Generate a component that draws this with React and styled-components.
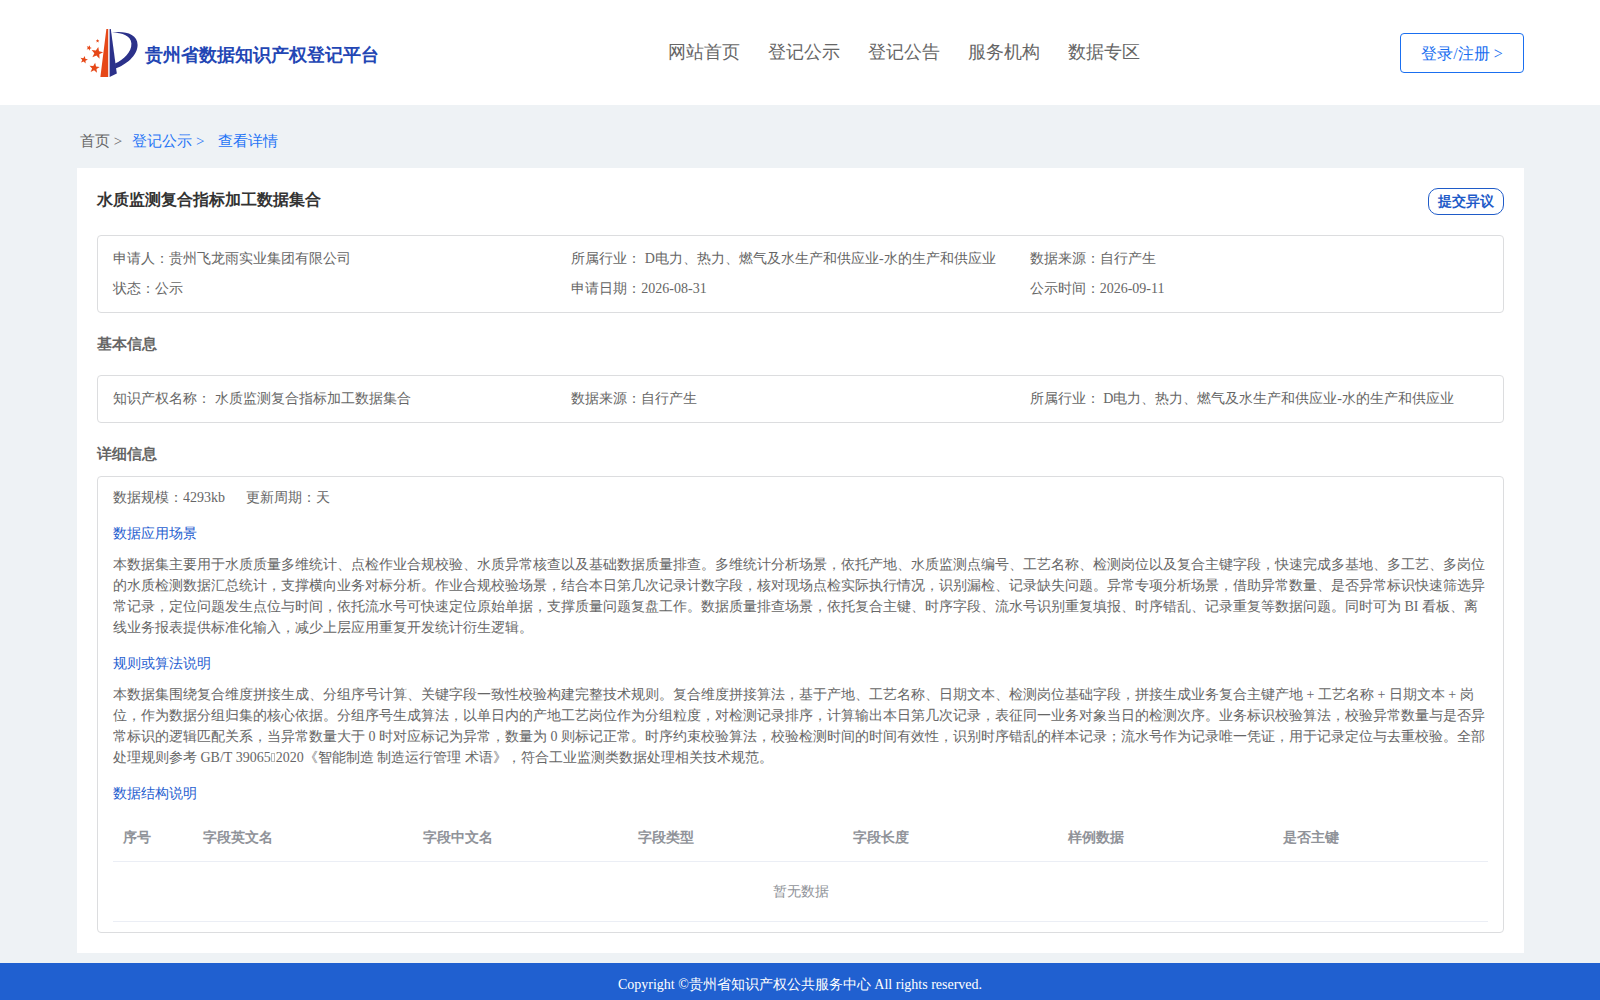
import React from "react";
import styled, { createGlobalStyle } from "styled-components";

const GlobalStyle = createGlobalStyle`
  * { box-sizing: border-box; }
  body {
    margin: 0;
    background: #eef2f5;
    color: #666;
    font-family: "Liberation Serif", serif;
    font-size: 14px;
    line-height: 21px;
  }
  button { font-family: inherit; cursor: pointer; }
  a { color: inherit; text-decoration: none; }
  h1, h2, h3, p, dl, dd { margin: 0; }
`;

const Header = styled.header`
  display: flex;
  align-items: center;
  justify-content: space-between;
  height: 105px;
  padding: 0 76px 0 80px;
  background: #fff;
`;

const Brand = styled.a`
  display: flex;
  align-items: center;
  gap: 7px;
  color: #2346b4;
  font-size: 18px;
  font-weight: bold;
`;

const BrandName = styled.span`
  padding-top: 6px;
`;

const Nav = styled.nav`
  display: flex;
  gap: 28px;
  padding-left: 28px;
  font-size: 18px;
`;

const LoginButton = styled.button`
  width: 124px;
  height: 40px;
  padding: 3px 0 0;
  border: 1px solid #1a6ff0;
  border-radius: 4px;
  background: #fff;
  color: #1a6ff0;
  font-size: 16px;
`;

const Main = styled.main`
  padding: 0 76px 10px 77px;
`;

const Breadcrumb = styled.nav`
  display: flex;
  gap: 10px;
  padding: 26px 3px 16px;
  font-size: 15px;
`;

const Crumb = styled.a`
  color: ${(p) => (p.$active ? "#1f74f5" : "#666")};
  white-space: pre;
`;

const Card = styled.section`
  padding: 20px;
  background: #fff;
`;

const CardHeader = styled.div`
  display: flex;
  align-items: flex-start;
  justify-content: space-between;
  margin-bottom: 20px;
`;

const Title = styled.h1`
  color: #333;
  font-size: 16px;
  line-height: 24px;
`;

const ObjectionButton = styled.button`
  width: 76px;
  height: 27px;
  padding: 0;
  border: 1px solid #1f5bc8;
  border-radius: 10px;
  background: #fff;
  color: #1f5bc8;
  font-size: 14px;
  font-weight: bold;
`;

const SectionTitle = styled.h2`
  margin: 20px 0 ${(p) => (p.$tight ? "11px" : "20px")};
  font-size: 15px;
  line-height: 22px;
`;

const Panel = styled.div`
  border: 1px solid #dcdddf;
  border-radius: 4px;
  padding: ${(p) => p.$pad};
`;

const InfoGrid = styled.dl`
  display: grid;
  grid-template-columns: repeat(3, 1fr);
  line-height: 30px;
`;

const InfoItem = styled.div`
  display: flex;
  white-space: pre;
`;

const Meta = styled.dl`
  display: flex;
  gap: 21px;
`;

const DetailTitle = styled.h3`
  margin: 15px 0 10px;
  color: #1f60d0;
  font-size: 14px;
  font-weight: normal;
`;

const MissingGlyph = styled.span`
  display: inline-block;
  width: 4px;
  height: 9px;
  margin-right: 1px;
  border: 1px solid #b8b8b8;
`;

const Table = styled.table`
  width: 100%;
  table-layout: fixed;
  border-collapse: separate;
  border-spacing: 0;
  color: #909399;
`;

const Th = styled.th`
  width: ${(p) => p.$w};
  height: 48px;
  padding: 0 10px;
  border-bottom: 1px solid #ebeef5;
  text-align: left;
`;

const EmptyCell = styled.td`
  height: 60px;
  padding: 0;
  border-bottom: 1px solid #ebeef5;
  text-align: center;
`;

const Footer = styled.footer`
  padding: 11px 0 5px;
  background: #2060d0;
  color: #fff;
  text-align: center;
`;

const STAR = "0,-1 0.26,-0.34 0.95,-0.31 0.41,0.13 0.59,0.81 0,0.42 -0.59,0.81 -0.41,0.13 -0.95,-0.31 -0.26,-0.34";

const Star = ({ x, y, r, turn }) => (
  <polygon points={STAR} fill="#e64818" transform={`translate(${x} ${y}) rotate(${turn}) scale(${r})`} />
);

const Logo = () => (
  <svg width="58" height="50" viewBox="0 0 58 50" aria-hidden="true">
    <path d="M26.4 1 H28.2 V49 H20.4 Z" fill="#e64818" />
    <path d="M29.6 1 H30.8 L36.8 45.6 L29.6 49 Z" fill="#2b318a" />
    <path d="M32 4.6 C43 2.6 57.8 5.2 57.6 17 C57.4 28 46 36.6 35.4 40.6 L35 35.4 C43.6 31.6 51.8 24 51.4 15.4 C51 8 42.6 4.8 32 4.6 Z" fill="#2b318a" />
    <Star x={17} y={25} r={6.2} turn={12} />
    <Star x={14.4} y={40} r={5.4} turn={8} />
    <Star x={4} y={31.8} r={4} turn={12} />
    <Star x={9} y={20} r={2.8} turn={20} />
    <Star x={17.6} y={13} r={1.9} turn={0} />
  </svg>
);

const NAV = ["网站首页", "登记公示", "登记公告", "服务机构", "数据专区"];

const SUMMARY = [
  ["申请人：", "贵州飞龙雨实业集团有限公司"],
  ["所属行业：", " D电力、热力、燃气及水生产和供应业-水的生产和供应业"],
  ["数据来源：", "自行产生"],
  ["状态：", "公示"],
  ["申请日期：", "2026-08-31"],
  ["公示时间：", "2026-09-11"],
];

const BASIC = [
  ["知识产权名称：", " 水质监测复合指标加工数据集合"],
  ["数据来源：", "自行产生"],
  ["所属行业：", " D电力、热力、燃气及水生产和供应业-水的生产和供应业"],
];

const META = [
  ["数据规模：", "4293kb"],
  ["更新周期：", "天"],
];

const SCENARIO =
  "本数据集主要用于水质质量多维统计、点检作业合规校验、水质异常核查以及基础数据质量排查。多维统计分析场景，依托产地、水质监测点编号、工艺名称、检测岗位以及复合主键字段，快速完成多基地、多工艺、多岗位的水质检测数据汇总统计，支撑横向业务对标分析。作业合规校验场景，结合本日第几次记录计数字段，核对现场点检实际执行情况，识别漏检、记录缺失问题。异常专项分析场景，借助异常数量、是否异常标识快速筛选异常记录，定位问题发生点位与时间，依托流水号可快速定位原始单据，支撑质量问题复盘工作。数据质量排查场景，依托复合主键、时序字段、流水号识别重复填报、时序错乱、记录重复等数据问题。同时可为 BI 看板、离线业务报表提供标准化输入，减少上层应用重复开发统计衍生逻辑。";

const ALGORITHM =
  "本数据集围绕复合维度拼接生成、分组序号计算、关键字段一致性校验构建完整技术规则。复合维度拼接算法，基于产地、工艺名称、日期文本、检测岗位基础字段，拼接生成业务复合主键产地 + 工艺名称 + 日期文本 + 岗位，作为数据分组归集的核心依据。分组序号生成算法，以单日内的产地工艺岗位作为分组粒度，对检测记录排序，计算输出本日第几次记录，表征同一业务对象当日的检测次序。业务标识校验算法，校验异常数量与是否异常标识的逻辑匹配关系，当异常数量大于 0 时对应标记为异常，数量为 0 则标记正常。时序约束校验算法，校验检测时间的时间有效性，识别时序错乱的样本记录；流水号作为记录唯一凭证，用于记录定位与去重校验。全部处理规则参考 GB/T 39065";

const ALGORITHM_END = "2020《智能制造 制造运行管理 术语》，符合工业监测类数据处理相关技术规范。";

const COLUMNS = [
  ["序号", "80px"],
  ["字段英文名", "220px"],
  ["字段中文名", "auto"],
  ["字段类型", "auto"],
  ["字段长度", "auto"],
  ["样例数据", "auto"],
  ["是否主键", "auto"],
];

const Items = ({ items }) =>
  items.map(([label, value]) => (
    <InfoItem key={label}>
      <dt>{label}</dt>
      <dd>{value}</dd>
    </InfoItem>
  ));

export default function App() {
  return (
    <div>
      <GlobalStyle />
      <Header>
        <Brand href="#">
          <Logo />
          <BrandName>贵州省数据知识产权登记平台</BrandName>
        </Brand>
        <Nav>
          {NAV.map((n) => (
            <a href="#" key={n}>{n}</a>
          ))}
        </Nav>
        <LoginButton type="button">登录/注册 &gt;</LoginButton>
      </Header>
      <Main>
        <Breadcrumb>
          <Crumb href="#">{"首页 >"}</Crumb>
          <Crumb href="#" $active>{"登记公示 > "}</Crumb>
          <Crumb href="#" $active>查看详情</Crumb>
        </Breadcrumb>
        <Card>
          <CardHeader>
            <Title>水质监测复合指标加工数据集合</Title>
            <ObjectionButton type="button">提交异议</ObjectionButton>
          </CardHeader>
          <Panel $pad="8px 15px">
            <InfoGrid><Items items={SUMMARY} /></InfoGrid>
          </Panel>
          <SectionTitle>基本信息</SectionTitle>
          <Panel $pad="8px 15px">
            <InfoGrid><Items items={BASIC} /></InfoGrid>
          </Panel>
          <SectionTitle $tight>详细信息</SectionTitle>
          <Panel $pad="10px 15px">
            <Meta><Items items={META} /></Meta>
            <DetailTitle>数据应用场景</DetailTitle>
            <p>{SCENARIO}</p>
            <DetailTitle>规则或算法说明</DetailTitle>
            <p>{ALGORITHM}<MissingGlyph />{ALGORITHM_END}</p>
            <DetailTitle>数据结构说明</DetailTitle>
            <Table>
              <thead>
                <tr>
                  {COLUMNS.map(([name, w]) => (
                    <Th key={name} $w={w} scope="col">{name}</Th>
                  ))}
                </tr>
              </thead>
              <tbody>
                <tr><EmptyCell colSpan={7}>暂无数据</EmptyCell></tr>
              </tbody>
            </Table>
          </Panel>
        </Card>
      </Main>
      <Footer>Copyright ©贵州省知识产权公共服务中心 All rights reserved.</Footer>
    </div>
  );
}
